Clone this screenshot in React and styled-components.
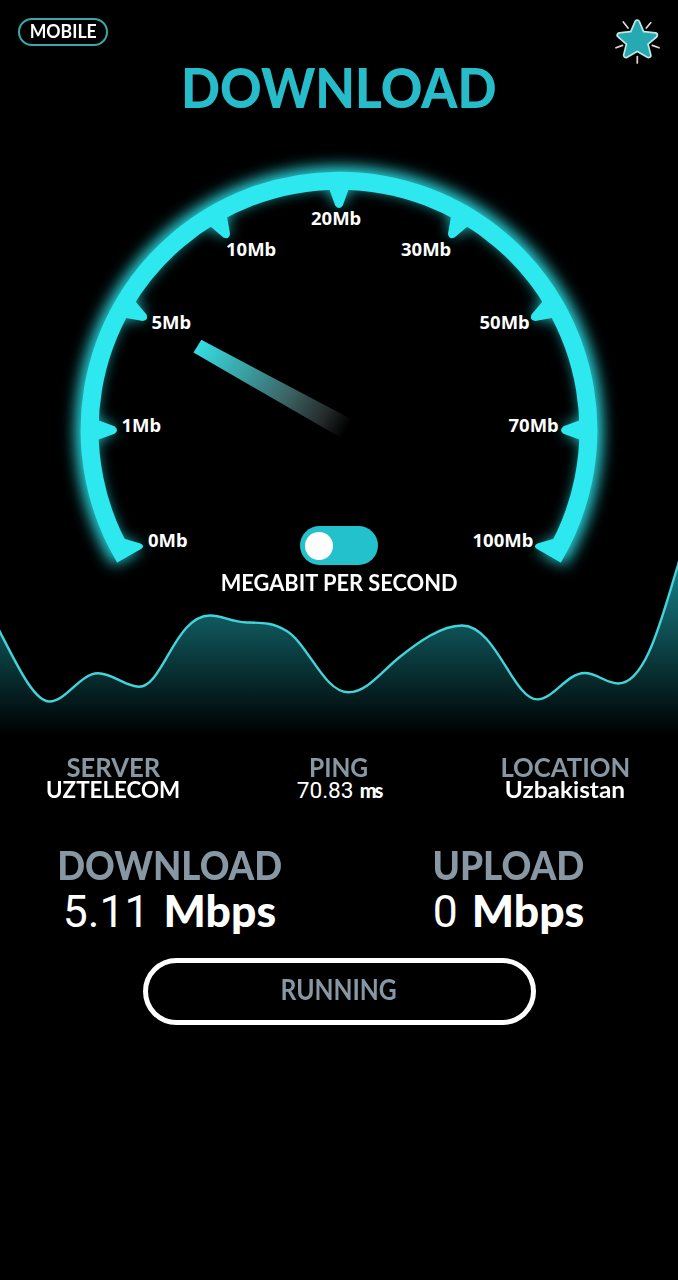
import React, { useState } from "react";
import styled, { createGlobalStyle } from "styled-components";

const GlobalStyle = createGlobalStyle`
  * {
    box-sizing: border-box;
  }
  body {
    margin: 0;
    background: #000;
  }
`;

const Page = styled.main`
  display: flex;
  flex-direction: column;
  width: 678px;
  min-height: 1280px;
  overflow: hidden;
  background: #000;
  color: #fff;
  font-family: Lato, "Liberation Sans", sans-serif;
  font-weight: 700;
  white-space: nowrap;
`;

// narrows or widens the lettering around its own centre
const Text = styled.span`
  display: inline-block;
  transform: scaleX(${props => props.$stretch || 1});
`;

const TopBar = styled.header`
  display: flex;
  justify-content: space-between;
  align-items: flex-start;
  height: 62px;
  padding: 18px 18px 0;
`;

const Badge = styled.span`
  display: flex;
  justify-content: center;
  width: 90px;
  height: 28px;
  border: 2px solid #38a9ab;
  border-radius: 14px;
  font-size: 18px;
  line-height: 23px;
`;

const StarButton = styled.button`
  display: flex;
  padding: 0;
  border: none;
  background: none;
`;

const Title = styled.h1`
  height: 52px;
  margin: 0;
  color: #26bcc9;
  font-size: 55px;
  font-weight: 900;
  line-height: 51px;
  text-align: center;
`;

const GaugeSection = styled.section`
  display: grid;
  height: 482px;
  > * {
    grid-area: 1 / 1;
  }
`;

const TickLabel = styled.text`
  fill: #fff;
  font-family: "Noto Sans", sans-serif;
  font-size: 18.5px;
  font-weight: 700;
`;

const Controls = styled.div`
  display: flex;
  flex-direction: column;
  align-items: center;
  align-self: end;
  gap: 7px;
  padding-bottom: 2px;
`;

const Toggle = styled.button`
  display: flex;
  align-items: center;
  justify-content: ${props => (props.$on ? "flex-end" : "flex-start")};
  width: 78px;
  height: 39px;
  padding: 0 5px;
  border: none;
  border-radius: 20px;
  background: #22c1cc;
`;

const Knob = styled.span`
  width: 28px;
  height: 28px;
  border-radius: 50%;
  background: #fff;
`;

const Unit = styled.span`
  font-size: 22.5px;
  line-height: 22px;
`;

const Wave = styled.svg`
  display: block;
  margin-top: -36px;
`;

const Stats = styled.section`
  display: grid;
  grid-template-columns: repeat(3, 1fr);
  margin-top: 15px;
`;

const Speeds = styled.section`
  display: grid;
  grid-template-columns: repeat(2, 1fr);
  margin-top: 47px;
`;

const Cell = styled.div`
  display: flex;
  flex-direction: column;
  align-items: center;
`;

const Label = styled.span`
  height: ${props => (props.$large ? 34 : 24)}px;
  color: #8797a3;
  font-size: ${props => (props.$large ? 39 : 27)}px;
  font-weight: ${props => (props.$large ? 900 : 700)};
  line-height: ${props => (props.$large ? 34 : 23)}px;
`;

const Value = styled.span`
  display: flex;
  align-items: baseline;
  gap: ${props => (props.$large ? 14 : 6)}px;
  height: ${props => (props.$large ? 58 : 22)}px;
  font-size: ${props => (props.$large ? 44.5 : 22.7)}px;
  font-weight: ${props => (props.$large ? 900 : 700)};
  line-height: ${props => (props.$large ? 56 : 22)}px;
`;

const Num = styled.span`
  font-family: Roboto, sans-serif;
  font-weight: 400;
`;

const Ms = styled.span`
  font-size: 20px;
  font-weight: 900;
  letter-spacing: -2px;
`;

const RunButton = styled.button`
  align-self: center;
  width: 393px;
  height: 67px;
  margin-top: 18px;
  padding: 0 0 6px;
  border: 5px solid #fff;
  border-radius: 34px;
  background: none;
  color: #8797a3;
  font-family: inherit;
  font-size: 28.7px;
  font-weight: 700;
`;

const CX = 339;
const CY = 430;

const tickAngles = [-90, -60, -30, 0, 30, 60, 90];

const tickLabels = [
  { text: "0Mb", x: 148, y: 546.5 },
  { text: "1Mb", x: 121.5, y: 432 },
  { text: "5Mb", x: 151.5, y: 329 },
  { text: "10Mb", x: 226, y: 256 },
  { text: "20Mb", x: 311, y: 224.5 },
  { text: "30Mb", x: 401, y: 256 },
  { text: "50Mb", x: 479.5, y: 329 },
  { text: "70Mb", x: 508.5, y: 432 },
  { text: "100Mb", x: 472.5, y: 546.5 },
];

const Star = () => {
  const shape =
    "M637.2 22.5 L642 33.8 L655 35.2 L645.4 43.4 L648.5 55.2 L637.2 48.8 L626 55.2 L629 43.4 L619.6 35.2 L632.4 33.8 Z";
  return (
    <svg width="46" height="48" viewBox="614 18 46 48" fill="none" strokeLinejoin="round">
      <path d={shape} stroke="#bfe6e6" strokeWidth="6.4" />
      <path d={shape} fill="#26a9b0" stroke="#26a9b0" strokeWidth="3" />
      <path
        d="M623.3 22 L628 28 M650.7 22.7 L646.3 28 M616 47.8 L622.5 45.4 M652.3 45.4 L659 47.8 M637.3 56.5 V63"
        stroke="#e3d9cf"
        strokeWidth="1.7"
        strokeLinecap="round"
      />
    </svg>
  );
};

const Dial = () => (
  <g>
    <path
      d="M124.8 557.8 A249.4 249.4 0 1 1 553.2 557.8"
      fill="none"
      stroke="#2ee8ef"
      strokeWidth="18"
    />
    {tickAngles.map(a => (
      <path
        key={a}
        transform={`rotate(${a} ${CX} ${CY})`}
        d="M328.5 187 L335.2 205.5 Q339 210.5 342.8 205.5 L349.5 187 Z"
        fill="#2ee8ef"
      />
    ))}
    <path d="M121 534 L123.5 538.5 L140.5 543.5 Q145.5 546 141 549 L117 562.5 Z" fill="#2ee8ef" />
    <path d="M557 534 L554.5 538.5 L537.5 543.5 Q532.5 546 537 549 L561 562.5 Z" fill="#2ee8ef" />
  </g>
);

const Gauge = () => (
  <svg width="678" height="482" viewBox="0 114 678 482">
    <defs>
      <filter id="glow" x="-20%" y="-20%" width="140%" height="140%">
        <feGaussianBlur stdDeviation="7.5" />
      </filter>
      <linearGradient id="needle" gradientUnits="userSpaceOnUse" x1="197" y1="346" x2="346" y2="430">
        <stop offset="0" stopColor="#35dce2" />
        <stop offset="0.3" stopColor="#3aa3a6" />
        <stop offset="0.6" stopColor="#3c6465" />
        <stop offset="0.85" stopColor="#252a2a" />
        <stop offset="1" stopColor="#000" />
      </linearGradient>
    </defs>
    <g filter="url(#glow)" transform="translate(339 430) scale(1.018) translate(-339 -430)">
      <Dial />
    </g>
    <Dial />
    <path d="M201.3 339.8 L353 420 L343 439 L193.5 352.6 Z" fill="url(#needle)" />
    {tickLabels.map(({ text, x, y }) => (
      <TickLabel key={text} x={x} y={y}>{text}</TickLabel>
    ))}
  </svg>
);

const line =
  "M-4 624 L0 632 C17 665 34 701.5 49.5 701.5 C66 701.5 80 673.3 98 673.3 " +
  "C113 673.3 125 686.7 139 686.7 C163 686.7 175 615.5 210 615.5 " +
  "C223 615.5 231 622.3 247 622.5 C262 622.7 273 622.5 286.7 631 " +
  "C308 644 324 692.3 348.5 692.3 C367 692.3 382 671 399.7 657 " +
  "C418 642.5 441 625.5 462 625.5 C496 625.5 513 699.4 537.5 699.4 " +
  "C553 699.4 567 673 584.7 673 C597 673 606 683.5 618.5 683.5 " +
  "C646 683.5 662 617 678 565 L682 550";

const App = () => {
  const [megabyte, setMegabyte] = useState(false);
  return (
    <Page>
      <GlobalStyle />
      <TopBar>
        <Badge><Text $stretch={0.98}>MOBILE</Text></Badge>
        <StarButton aria-label="Rate"><Star /></StarButton>
      </TopBar>
      <Title><Text $stretch={0.935}>DOWNLOAD</Text></Title>

      <GaugeSection>
        <Gauge />
        <Controls>
          <Toggle $on={megabyte} onClick={() => setMegabyte(!megabyte)}>
            <Knob />
          </Toggle>
          <Unit><Text $stretch={0.97}>MEGABIT PER SECOND</Text></Unit>
        </Controls>
      </GaugeSection>

      <Wave width="678" height="180" viewBox="0 560 678 180">
        <defs>
          <linearGradient id="fade" gradientUnits="userSpaceOnUse" x1="0" y1="560" x2="0" y2="735">
            <stop offset="0" stopColor="#22c1cc" stopOpacity="0.68" />
            <stop offset="1" stopColor="#22c1cc" stopOpacity="0" />
          </linearGradient>
        </defs>
        <path d={`${line} V740 H-4 Z`} fill="url(#fade)" />
        <path d={line} fill="none" stroke="#43d3da" strokeWidth="2.4" />
      </Wave>

      <Stats>
        <Cell>
          <Label><Text $stretch={0.95}>SERVER</Text></Label>
          <Value><Text $stretch={0.985}>UZTELECOM</Text></Value>
        </Cell>
        <Cell>
          <Label><Text $stretch={0.91}>PING</Text></Label>
          <Value><Num>70.83</Num> <Ms>ms</Ms></Value>
        </Cell>
        <Cell>
          <Label><Text $stretch={0.95}>LOCATION</Text></Label>
          <Value><Text $stretch={1.075}>Uzbakistan</Text></Value>
        </Cell>
      </Stats>

      <Speeds>
        <Cell>
          <Label $large><Text $stretch={0.94}>DOWNLOAD</Text></Label>
          <Value $large><Num>5.11</Num> <span>Mbps</span></Value>
        </Cell>
        <Cell>
          <Label $large><Text $stretch={0.945}>UPLOAD</Text></Label>
          <Value $large><Num>0</Num> <span>Mbps</span></Value>
        </Cell>
      </Speeds>

      <RunButton><Text $stretch={0.86}>RUNNING</Text></RunButton>
    </Page>
  );
};

export default App;
